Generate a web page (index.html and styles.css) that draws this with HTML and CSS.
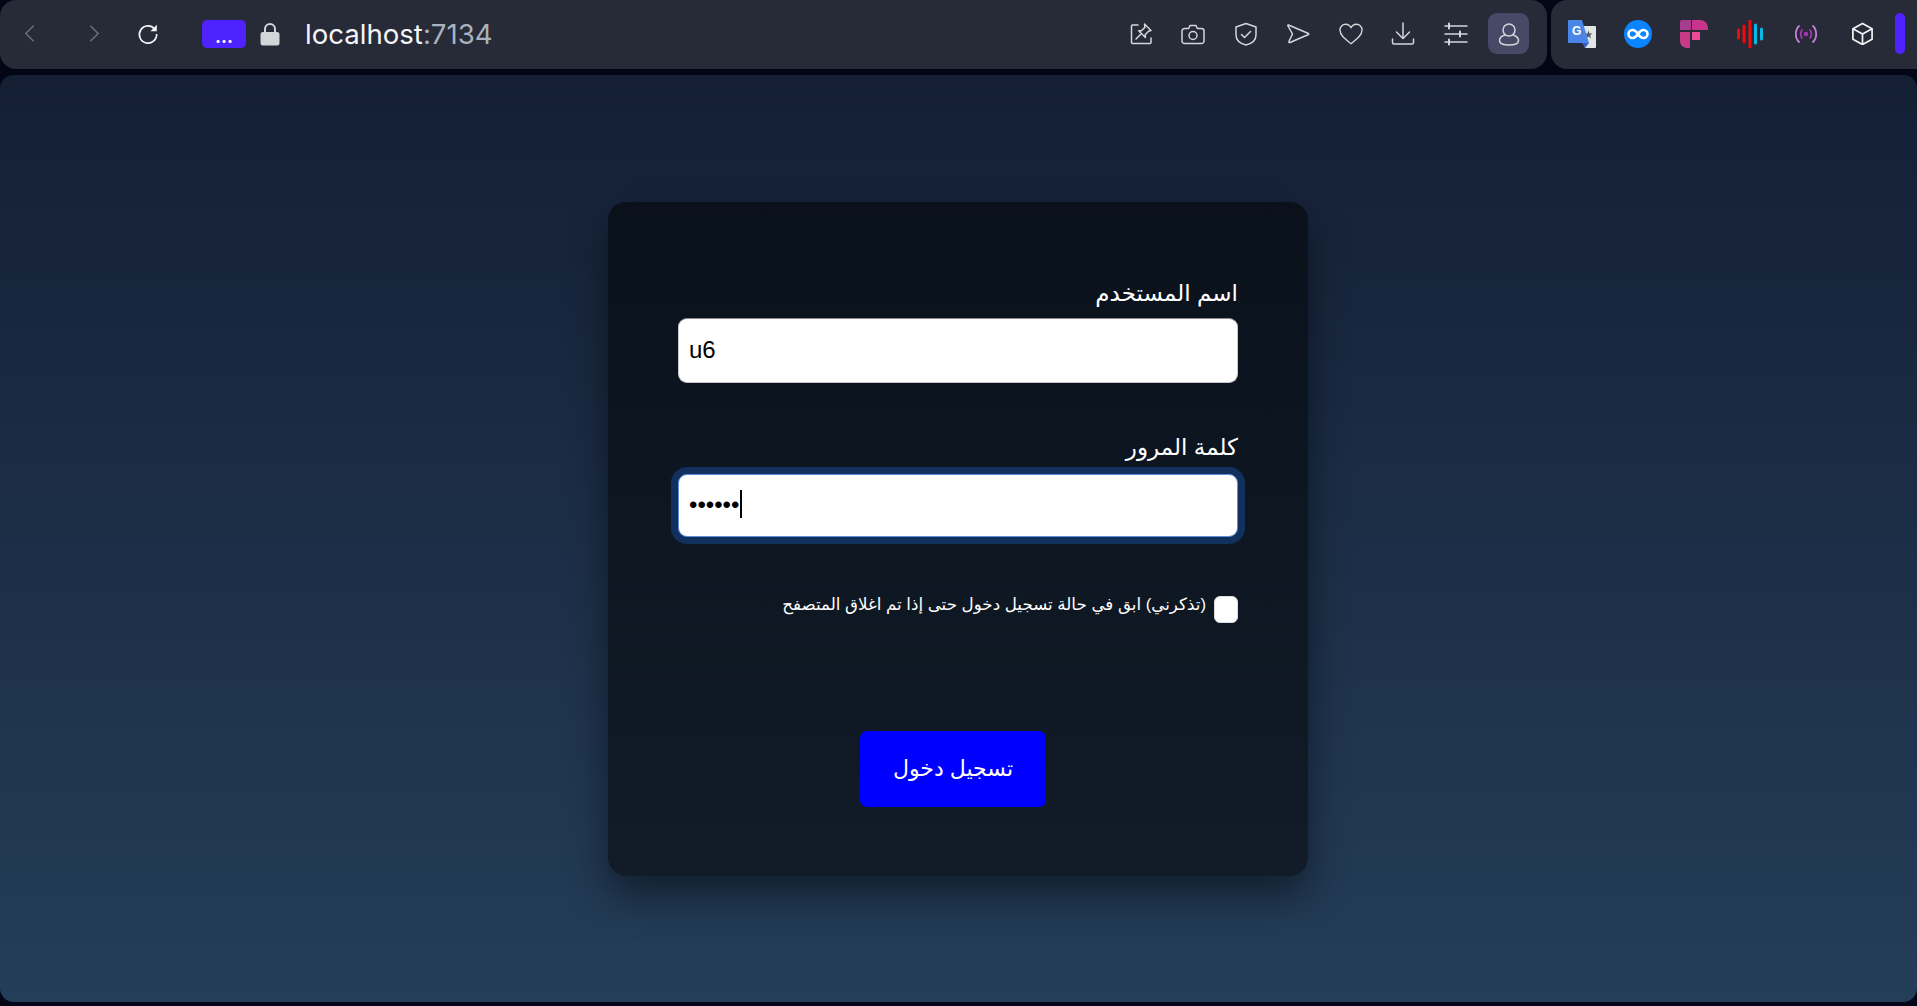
FILE: index.html
```html
<!DOCTYPE html>
<html lang="ar">
<head>
    <meta charset="UTF-8">
    <meta name="viewport" content="width=device-width, initial-scale=1.0">
    <title>تسجيل دخول</title>
    <link rel="stylesheet" href="styles.css">
</head>
<body>
    <header class="browser-bar">
        <div class="toolbar" dir="ltr">
            <div class="nav-buttons">
                <svg class="nav-icon" viewBox="0 0 12 20"><path d="M10.500 1.500 2 10l8.500 8.500"/></svg>
                <svg class="nav-icon" viewBox="0 0 12 20"><path d="M1.500 1.500 10 10l-8.500 8.500"/></svg>
                <svg class="reload" viewBox="0 0 22 22"><path d="M17.600 6A8.600 8.600 0 1 0 19.600 11"/><path class="solid" d="M19.800 1.800v6.400h-6.400z"/></svg>
            </div>
            <div class="address">
                <span class="badge">...</span>
                <svg class="lock" viewBox="0 0 20 24"><path class="shackle" d="M5 11V7a5 5 0 0 1 10 0v4"/><rect class="lock-body" x="0.500" y="10" width="19" height="13.500" rx="2.500"/></svg>
                <span class="url">localhost<span class="port">:7134</span></span>
            </div>
            <div class="actions">
                <svg class="tool" viewBox="0 0 24 24"><path d="M9 3H3.500a1 1 0 0 0-1 1v16.500a1 1 0 0 0 1 1H21a1 1 0 0 0 1-1V16"/><path d="m15.500 2 6.500 6.500-2.500.8-3.300 3.500.2 2.700-6.700-6.700 2.700-.1 3.500-3.300z"/><path d="m11.500 12.500-4.500 4.500"/></svg>
                <svg class="tool" viewBox="0 0 24 24"><path d="M3.500 6.500h4.200l1.300-3h6l1.300 3h4.200A2.500 2.500 0 0 1 23 9v10a2.500 2.500 0 0 1-2.500 2.500h-17A2.500 2.500 0 0 1 1 19V9a2.500 2.500 0 0 1 2.500-2.500z"/><circle cx="12" cy="13.500" r="4"/></svg>
                <svg class="tool" viewBox="0 0 24 24"><path d="M12 1.500 22 5v8c0 5-4 8.500-10 10C6 21.500 2 18 2 13V5z"/><path d="m7.500 12.500 3 3 6-6"/></svg>
                <svg class="tool" viewBox="0 0 24 24"><path d="M2.500 3 22.500 11.500a.6.6 0 0 1 0 1L4 20.500c-1 .3-1.500-.4-1-1.200l3.500-7.300L2 4c-.4-.8-.2-1.300.5-1z"/></svg>
                <svg class="tool" viewBox="0 0 26 24"><path d="M13 22.500C6 17 1 13 1 7.800 1 4 3.800 1.500 7 1.500c2.500 0 4.800 1.300 6 3.800 1.200-2.500 3.500-3.800 6-3.800 3.200 0 6 2.500 6 6.300 0 5.200-5 9.200-12 14.700z"/></svg>
                <svg class="tool" viewBox="0 0 24 24"><path d="M12 1v15"/><path d="m5.500 10 6.500 6.500 6.500-6.500"/><path d="M1.500 17v3.500a1.500 1.500 0 0 0 1.500 1.500h18a1.500 1.500 0 0 0 1.500-1.500V17"/></svg>
                <svg class="tool" viewBox="0 0 24 24"><path d="M1 4h22M1 12h22M1 20h22"/><path class="thick" d="M5 1.500v5M16 9.500v5M5 17.500v5"/></svg>
                <div class="profile">
                    <svg class="tool" viewBox="0 0 24 24"><circle cx="12" cy="8" r="6"/><path d="M8 13c-3.500 1-5.500 3-5.500 5.500C2.500 21 5 23 12 23s9.500-2 9.500-4.500c0-2.500-2-4.500-5.500-5.500"/></svg>
                </div>
            </div>
        </div>
        <div class="extensions" dir="ltr">
            <svg class="ext" viewBox="0 0 28 28">
                <path fill="#e3e5e5" d="M12 6h15a1 1 0 0 1 1 1v20a1 1 0 0 1-1 1H17z"/>
                <path fill="#4c5a62" d="M20.500 10.500l1 3h3l-2.400 1.800.9 3-2.500-1.900-2.500 1.900.9-3-2.400-1.800h3z"/>
                <path fill="#4a86e8" d="M1 0h13l7 23H1a1 1 0 0 1-1-1V1a1 1 0 0 1 1-1z"/>
                <path fill="#3b5fc4" d="M14 23h7l-4 5z"/>
                <text class="ext-g" x="4" y="15">G</text>
            </svg>
            <svg class="ext" viewBox="0 0 28 28">
                <circle cx="14" cy="14" r="14" fill="#0a84ff"/>
                <path class="infinity" d="M14 14c-2-3-3.500-4-5.500-4a4 4 0 0 0 0 8c2 0 3.500-1 5.500-4s3.500-4 5.500-4a4 4 0 0 1 0 8c-2 0-3.500-1-5.500-4z"/>
            </svg>
            <svg class="ext" viewBox="0 0 28 28">
                <path fill="#a83c8f" d="M0 2a2 2 0 0 1 2-2h9v10H0z"/>
                <path fill="#c9348c" d="M12 0h8a8 8 0 0 1 8 8v2H12z"/>
                <path fill="#c73a87" d="M0 12h10v16H7a7 7 0 0 1-7-7z"/>
                <path fill="#ea4c95" d="M12 12h8v8h-8z"/>
            </svg>
            <svg class="ext bars" viewBox="0 0 26 28">
                <path class="bar-red" d="M1.500 10v8M7 6v16M13 0.500v27"/>
                <path class="bar-blue" d="M18.500 5v18M24.500 9v10"/>
            </svg>
            <svg class="ext-small" viewBox="0 0 24 18">
                <path class="wave" d="M5 1C.8 5 .8 13 5 17M19 1c4.200 4 4.200 12 0 16"/>
                <path class="wave-inner" d="M8 5C6.300 7 6.300 11 8 13M16 5c1.700 2 1.700 6 0 8"/>
                <circle cx="12" cy="9" r="2.200" fill="#a537b5"/>
            </svg>
            <svg class="ext-box" viewBox="0 0 24 24"><path d="M12 1.500 22 7v11l-10 5.500L2 18V7z"/><path d="M2 7l10 5.500L22 7M12 12.500v11"/></svg>
            <span class="sidebar-handle"></span>
        </div>
    </header>

    <main class="page">
        <form class="login-card">
            <div class="field">
                <label for="username">اسم المستخدم</label>
                <input class="text-input" type="text" id="username" value="u6" dir="ltr">
            </div>
            <div class="field">
                <label for="password">كلمة المرور</label>
                <div class="input-wrap">
                    <input class="text-input focused" type="password" id="password" value="123456" dir="ltr">
                    <span class="caret"></span>
                </div>
            </div>
            <label class="remember">
                <input type="checkbox" class="remember-box">
                <span>(تذكرني) ابق في حالة تسجيل دخول حتى إذا تم اغلاق المتصفح</span>
            </label>
            <div class="submit-row">
                <button type="button" class="submit-btn">تسجيل دخول</button>
            </div>
        </form>
    </main>
</body>
</html>
```

FILE: styles.css
```css
/* Reset and Basic Styles */
* {
    box-sizing: border-box;
    margin: 0;
    padding: 0;
}

body {
    width: 1917px;
    height: 1006px;
    overflow: hidden;
    background-color: #030616;
    font-family: "Liberation Sans", "DejaVu Sans", sans-serif;
    display: flex;
    flex-direction: column;
}

/* Browser chrome */
.browser-bar {
    display: flex;
    gap: 4px;
    height: 69px;
    flex-shrink: 0;
}

.toolbar,
.extensions {
    display: flex;
    align-items: center;
    background-color: #272a37;
    padding-bottom: 2px;
    border-radius: 16px;
}

.toolbar {
    width: 1547px;
    padding-left: 24px;
}

.extensions {
    width: 366px;
    padding-left: 17px;
    border-top-right-radius: 0;
    border-bottom-right-radius: 0;
}

.nav-buttons {
    display: flex;
    align-items: center;
}

.nav-icon {
    width: 11px;
    height: 19px;
    fill: none;
    stroke: #6c7078;
    stroke-width: 1.6;
    margin-right: 54px;
}

.nav-icon + .nav-icon {
    margin-right: 37px;
}

.reload {
    width: 22px;
    height: 22px;
    fill: none;
    stroke: #f2f3f5;
    stroke-width: 1.7;
}

.reload .solid {
    fill: #f2f3f5;
    stroke: none;
}

.address {
    display: flex;
    align-items: center;
    margin-left: 43px;
}

.badge {
    width: 44px;
    height: 28px;
    background-color: #4f23ff;
    border-radius: 5px;
    color: #fff;
    font-family: "Inter", sans-serif;
    font-size: 18px;
    font-weight: 700;
    line-height: 34px;
    text-align: center;
}

.lock {
    width: 20px;
    height: 24px;
    margin-left: 14px;
}

.shackle {
    fill: none;
    stroke: #d3d6d8;
    stroke-width: 2;
}

.lock-body {
    fill: #d3d6d8;
}

.url {
    margin-left: 25px;
    font-family: "Inter", sans-serif;
    font-size: 27.6px;
    color: #f4f5f7;
}

.port {
    color: #a9b2bd;
}

.actions {
    display: flex;
    align-items: center;
    margin-left: auto;
    margin-right: 18px;
    gap: 28.5px;
}

.tool {
    width: 24px;
    height: 24px;
    fill: none;
    stroke: #d4d6da;
    stroke-width: 1.5;
    stroke-linejoin: round;
    stroke-linecap: round;
}

.tool .thick {
    stroke-width: 2;
}

.profile {
    width: 41px;
    height: 41px;
    margin-left: -8px;
    background-color: #474a66;
    border-radius: 9px;
    display: flex;
    align-items: center;
    justify-content: center;
}

.ext {
    width: 28px;
    height: 28px;
    margin-right: 28px;
}

.ext.bars {
    margin-right: 30px;
}

.ext-g {
    font-family: "Liberation Sans", sans-serif;
    font-size: 12px;
    font-weight: 700;
    fill: #fff;
}

.infinity {
    fill: none;
    stroke: #fff;
    stroke-width: 2.6;
}

.bar-red,
.bar-blue {
    fill: none;
    stroke-width: 3;
    stroke-linecap: round;
}

.bar-red {
    stroke: #f00a0a;
}

.bar-blue {
    stroke: #0ab8e8;
}

.ext-small {
    width: 24px;
    height: 18px;
    margin-right: 33px;
}

.wave,
.wave-inner {
    fill: none;
    stroke-width: 1.8;
    stroke-linecap: round;
}

.wave {
    stroke: #c77fdc;
}

.wave-inner {
    stroke: #a537b5;
}

.ext-box {
    width: 23px;
    height: 23px;
    fill: none;
    stroke: #f2f3f5;
    stroke-width: 1.8;
    stroke-linejoin: round;
    margin-right: 21px;
}

.sidebar-handle {
    width: 10px;
    height: 41px;
    background-color: #4f23ff;
    border-radius: 5px;
}

/* Page */
.page {
    height: 927px;
    margin-top: 6px;
    padding-right: 1px;
    border-radius: 14px;
    background: linear-gradient(to bottom, #141f34, #243d59);
    display: flex;
    align-items: center;
    justify-content: center;
}

.login-card {
    width: 700px;
    height: 674px;
    padding: 77px 70px 0;
    border-radius: 18px;
    background: linear-gradient(to bottom, #0a111b, #111c28);
    box-shadow: 0 20px 40px rgba(0, 0, 0, 0.45);
    direction: rtl;
}

.field {
    margin-bottom: 50px;
}

.field label {
    display: block;
    height: 39px;
    color: #fff;
    font-size: 23px;
    line-height: 28px;
}

.input-wrap {
    position: relative;
    margin-top: 2px;
}

.text-input {
    display: block;
    width: 560px;
    height: 65px;
    padding: 0 10px;
    font-family: "Liberation Sans", sans-serif;
    font-size: 24px;
    color: #000;
    background-color: #fff;
    border: 1px solid #c8c8c8;
    border-top-color: #8a8a8a;
    border-radius: 9px;
    outline: none;
}

.text-input.focused {
    height: 63px;
    border-color: #5b8fd6;
    box-shadow: 0 0 0 7px #12305e;
}

.caret {
    position: absolute;
    left: 62px;
    top: 16px;
    width: 2px;
    height: 28px;
    background-color: #000;
}

.remember {
    display: flex;
    align-items: flex-start;
    gap: 8px;
    margin-top: 57px;
    color: #fff;
    font-size: 16.7px;
    line-height: 22px;
}

.remember-box {
    appearance: none;
    width: 24px;
    height: 27px;
    margin-top: 2px;
    background-color: #fff;
    border: 1px solid #ddd;
    border-radius: 6px;
}

.submit-row {
    display: flex;
    justify-content: center;
    margin-top: 108px;
    padding-right: 10px;
}

.submit-btn {
    width: 186px;
    height: 76px;
    border: none;
    border-radius: 7px;
    background-color: #0000ff;
    color: #fff;
    font-family: "Liberation Sans", "DejaVu Sans", sans-serif;
    font-size: 22px;
}
```
